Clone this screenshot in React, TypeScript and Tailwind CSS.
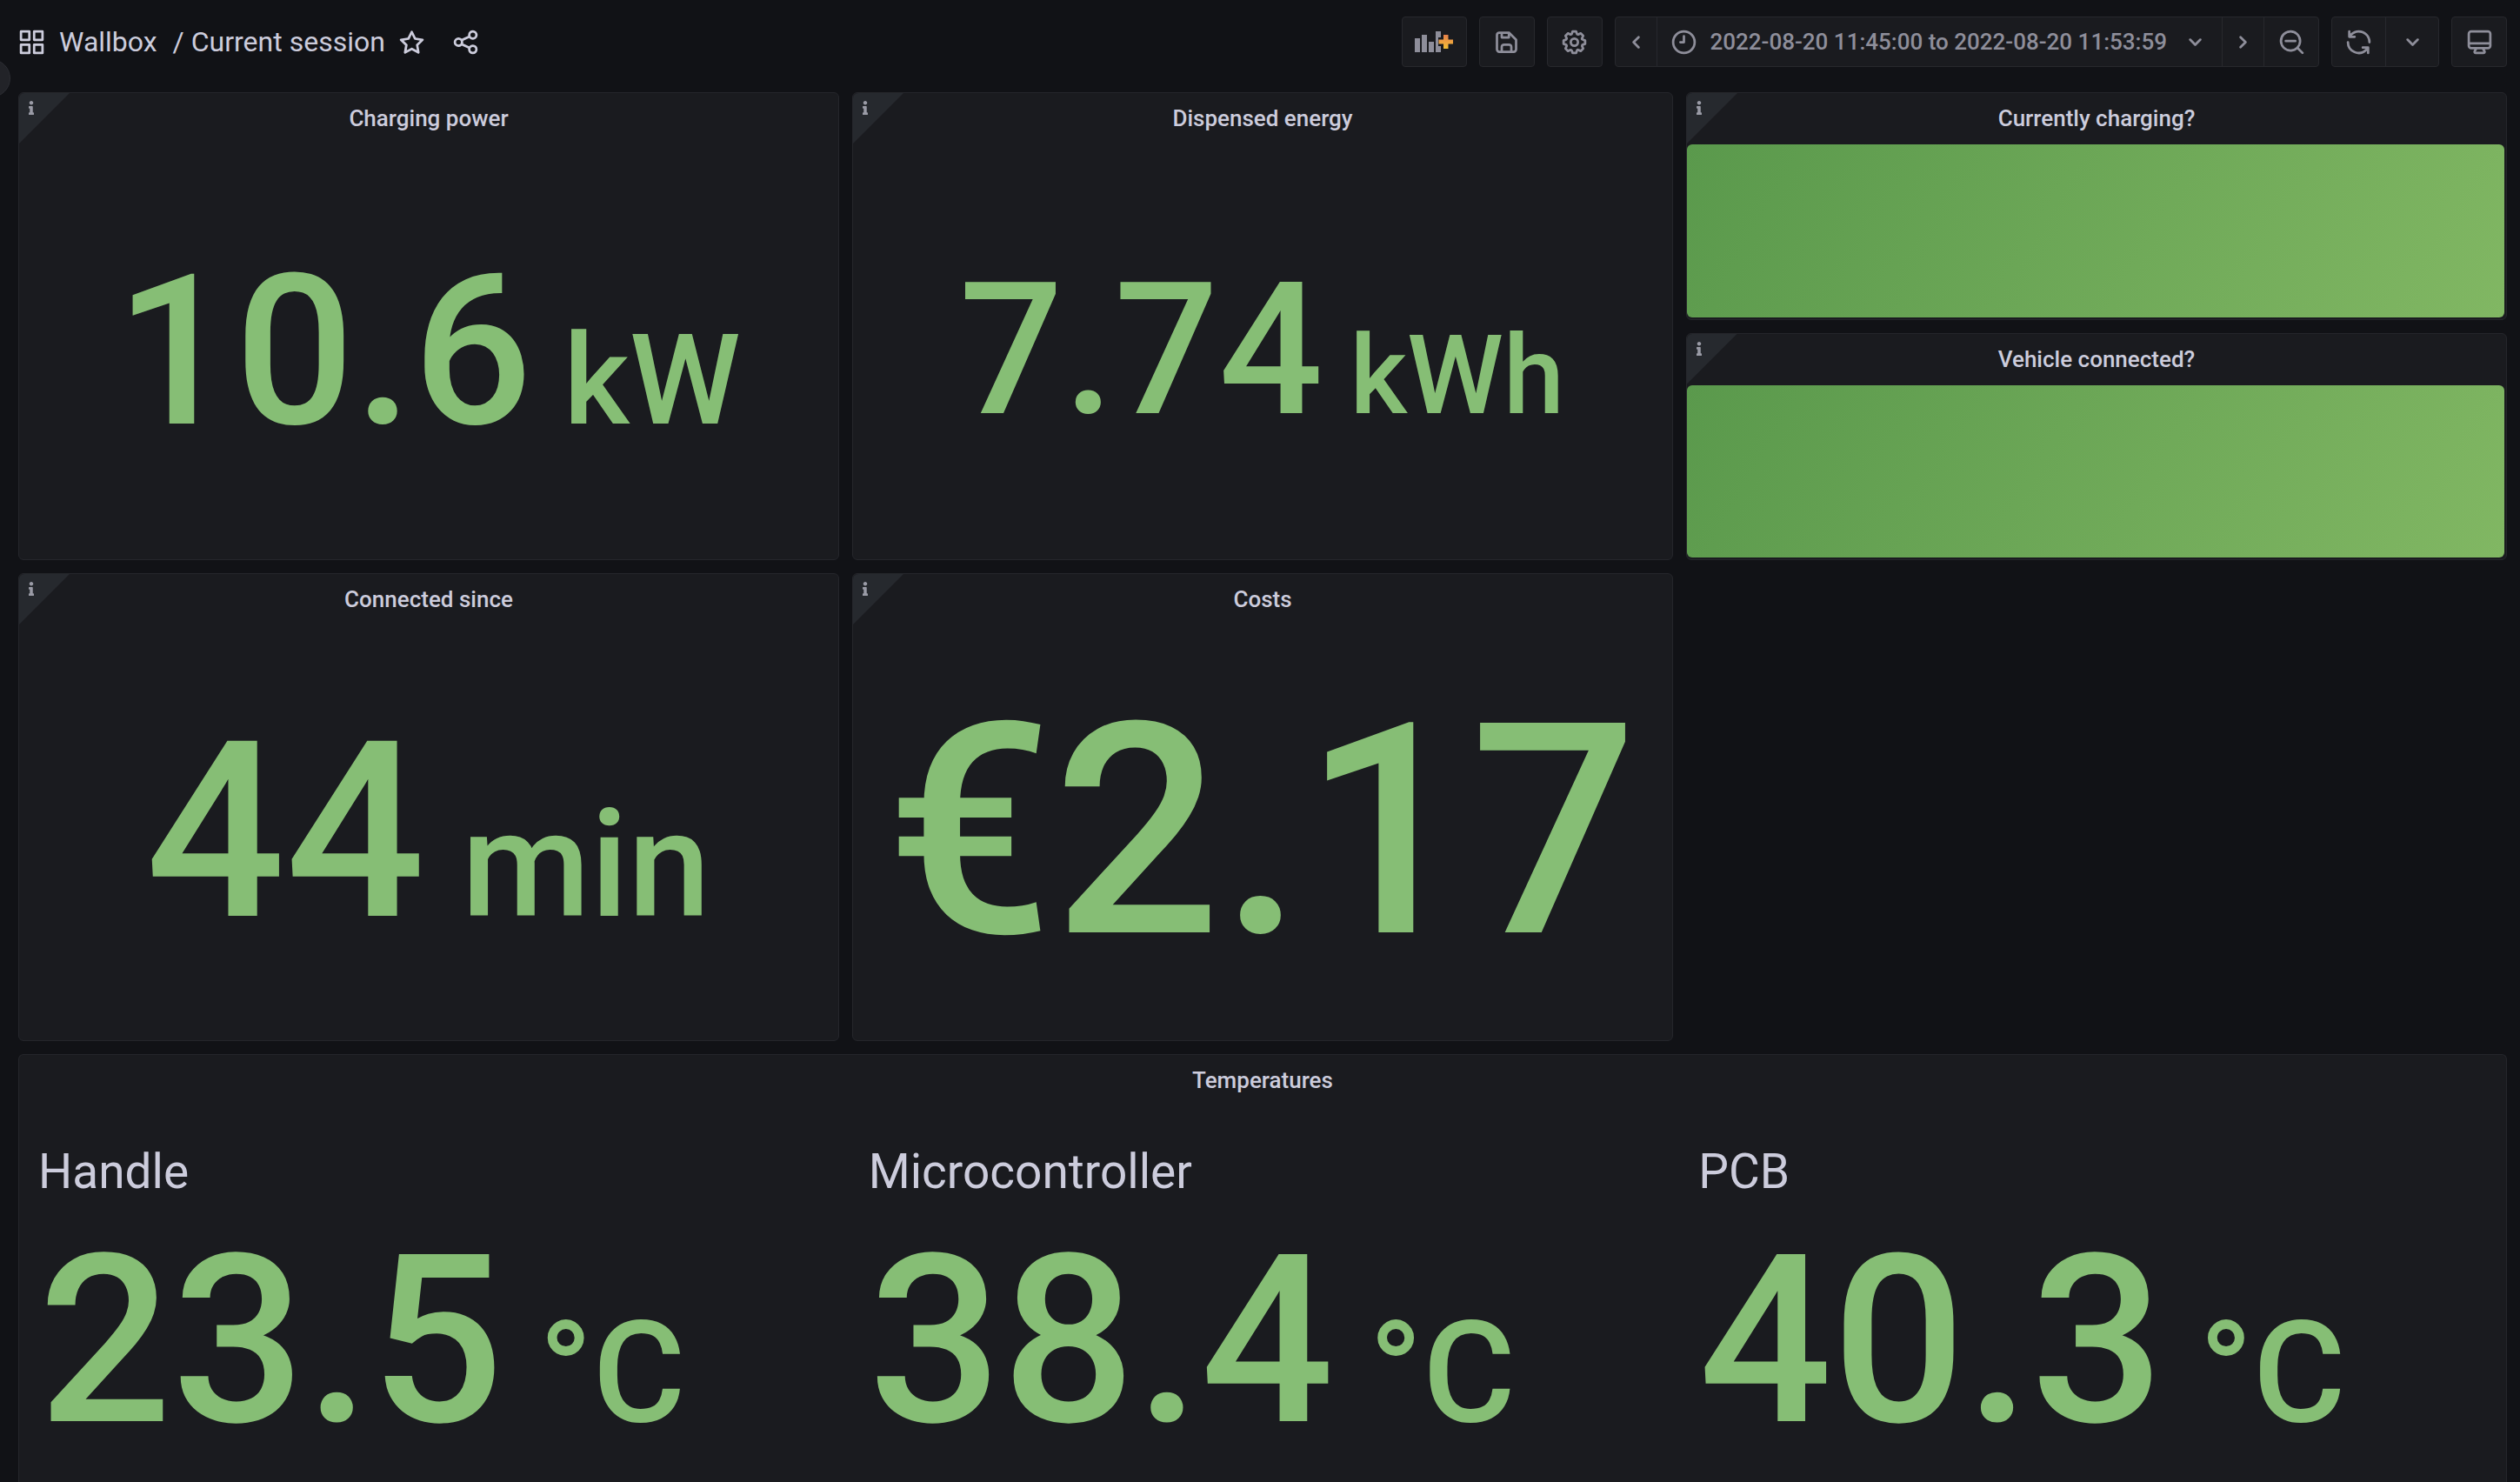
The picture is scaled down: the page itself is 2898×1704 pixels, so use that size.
import React from "react";
import { FaInfo } from "react-icons/fa";

const ICONS = {
  apps: "M10,13H3a1,1,0,0,0-1,1v7a1,1,0,0,0,1,1h7a1,1,0,0,0,1-1V14A1,1,0,0,0,10,13ZM9,20H4V15H9ZM21,2H14a1,1,0,0,0-1,1v7a1,1,0,0,0,1,1h7a1,1,0,0,0,1-1V3A1,1,0,0,0,21,2ZM20,9H15V4h5Zm1,4H14a1,1,0,0,0-1,1v7a1,1,0,0,0,1,1h7a1,1,0,0,0,1-1V14A1,1,0,0,0,21,13Zm-1,7H15V15h5ZM10,2H3A1,1,0,0,0,2,3v7a1,1,0,0,0,1,1h7a1,1,0,0,0,1-1V3A1,1,0,0,0,10,2ZM9,9H4V4H9Z",
  star: "M22,9.67A1,1,0,0,0,21.14,9l-5.69-.83L12.9,3a1,1,0,0,0-1.8,0L8.55,8.16,2.86,9a1,1,0,0,0-.81.68,1,1,0,0,0,.25,1l4.13,4-1,5.68A1,1,0,0,0,6.9,21.44L12,18.77l5.1,2.67a.93.93,0,0,0,.46.12,1,1,0,0,0,.59-.19,1,1,0,0,0,.4-1l-1-5.68,4.13-4A1,1,0,0,0,22,9.67Zm-6.15,4a1,1,0,0,0-.29.88l.72,4.2-3.76-2a1.06,1.06,0,0,0-.94,0l-3.76,2,.72-4.2a1,1,0,0,0-.29-.88l-3-3,4.21-.61a1,1,0,0,0,.76-.55L12,5.7l1.88,3.82a1,1,0,0,0,.76.55l4.21.61Z",
  share: "M18,14a4,4,0,0,0-3.08,1.48l-5.1-2.35a3.64,3.64,0,0,0,0-2.26l5.1-2.35A4,4,0,1,0,14,6a4.17,4.17,0,0,0,.07.71L8.79,9.14a4,4,0,1,0,0,5.72l5.28,2.43A4.17,4.17,0,0,0,14,18a4,4,0,1,0,4-4ZM18,4a2,2,0,1,1-2,2A2,2,0,0,1,18,4ZM6,14a2,2,0,1,1,2-2A2,2,0,0,1,6,14Zm12,6a2,2,0,1,1,2-2A2,2,0,0,1,18,20Z",
  save: "m20.71 9.29-6-6a1 1 0 0 0-.32-.21A1.09 1.09 0 0 0 14 3H6a3 3 0 0 0-3 3v12a3 3 0 0 0 3 3h12a3 3 0 0 0 3-3v-8a1 1 0 0 0-.29-.71ZM9 5h4v2H9Zm6 14H9v-3a1 1 0 0 1 1-1h4a1 1 0 0 1 1 1Zm4-1a1 1 0 0 1-1 1h-1v-3a3 3 0 0 0-3-3h-4a3 3 0 0 0-3 3v3H6a1 1 0 0 1-1-1V6a1 1 0 0 1 1-1h1v3a1 1 0 0 0 1 1h6a1 1 0 0 0 1-1V6.41l4 4Z",
  cog: "M21.32,9.55l-1.89-.63.89-1.78A1,1,0,0,0,20.13,6L18,3.87a1,1,0,0,0-1.15-.19l-1.78.89-.63-1.89A1,1,0,0,0,13.5,2h-3a1,1,0,0,0-.95.68L8.92,4.57,7.14,3.68A1,1,0,0,0,6,3.87L3.87,6a1,1,0,0,0-.19,1.15l.89,1.78-1.89.63A1,1,0,0,0,2,10.5v3a1,1,0,0,0,.68.95l1.89.63-.89,1.78A1,1,0,0,0,3.87,18L6,20.13a1,1,0,0,0,1.15.19l1.78-.89.63,1.89a1,1,0,0,0,.95.68h3a1,1,0,0,0,.95-.68l.63-1.89,1.78.89A1,1,0,0,0,18,20.13L20.13,18a1,1,0,0,0,.19-1.15l-.89-1.78,1.89-.63A1,1,0,0,0,22,13.5v-3A1,1,0,0,0,21.32,9.55ZM20,12.78l-1.2.4A2,2,0,0,0,17.64,16l.57,1.14-1.1,1.1L16,17.64a2,2,0,0,0-2.79,1.16l-.4,1.2H11.22l-.4-1.2A2,2,0,0,0,8,17.64l-1.14.57-1.1-1.1L6.36,16A2,2,0,0,0,5.2,13.18L4,12.78V11.22l1.2-.4A2,2,0,0,0,6.36,8L5.79,6.89l1.1-1.1L8,6.36A2,2,0,0,0,10.82,5.2l.4-1.2h1.56l.4,1.2A2,2,0,0,0,16,6.36l1.14-.57,1.1,1.1L17.64,8a2,2,0,0,0,1.16,2.79l1.2.4ZM12,8a4,4,0,1,0,4,4A4,4,0,0,0,12,8Zm0,6a2,2,0,1,1,2-2A2,2,0,0,1,12,14Z",
  clock: "M12,2A10,10,0,1,0,22,12,10,10,0,0,0,12,2Zm0,18a8,8,0,1,1,8-8A8,8,0,0,1,12,20ZM12,6a1,1,0,0,0-1,1v4H9a1,1,0,0,0,0,2h3a1,1,0,0,0,1-1V7A1,1,0,0,0,12,6Z",
  zoomOut: "M21.71,20.29,18,16.61A9,9,0,1,0,16.61,18l3.68,3.68a1,1,0,0,0,1.42,0A1,1,0,0,0,21.71,20.29ZM11,18a7,7,0,1,1,7-7A7,7,0,0,1,11,18Zm4-8H7a1,1,0,0,0,0,2h8a1,1,0,0,0,0-2Z",
  sync: "M19.91,15.51H15.38a1,1,0,0,0,0,2h2.4A8,8,0,0,1,4,12a1,1,0,1,0-2,0,10,10,0,0,0,16.88,7.23V21a1,1,0,0,0,2,0V16.5A1,1,0,0,0,19.91,15.51ZM12,2A10,10,0,0,0,5.12,4.77V3a1,1,0,0,0-2,0V7.5a1,1,0,0,0,1,1h4.5a1,1,0,0,0,0-2H6.22A8,8,0,0,1,20,12a1,1,0,0,0,2,0A10,10,0,0,0,12,2Z",
  monitor: "M19,2H5A3,3,0,0,0,2,5V15a3,3,0,0,0,3,3H7.64l-.58,1a2,2,0,0,0,0,2,2,2,0,0,0,1.75,1h6.46A2,2,0,0,0,17,21a2,2,0,0,0,0-2l-.59-1H19a3,3,0,0,0,3-3V5A3,3,0,0,0,19,2ZM8.77,20,10,18H14l1.2,2ZM20,15a1,1,0,0,1-1,1H5a1,1,0,0,1-1-1V14H20Zm0-3H4V5A1,1,0,0,1,5,4H19a1,1,0,0,1,1,1Z",
  down: "M17,9.17a1,1,0,0,0-1.41,0L12,12.71,8.46,9.17a1,1,0,0,0-1.41,0,1,1,0,0,0,0,1.42l4.24,4.24a1,1,0,0,0,1.42,0L17,10.59A1,1,0,0,0,17,9.17Z",
  left: "M11.29,12l3.54-3.54a1,1,0,0,0,0-1.41,1,1,0,0,0-1.42,0L9.17,11.29a1,1,0,0,0,0,1.42L13.41,17a1,1,0,0,0,.71.29,1,1,0,0,0,.71-.29,1,1,0,0,0,0-1.41Z",
  right: "M14.83,11.29,10.59,7.05a1,1,0,0,0-1.42,0,1,1,0,0,0,0,1.41L12.71,12,9.17,15.54a1,1,0,0,0,0,1.41,1,1,0,0,0,.71.29,1,1,0,0,0,.71-.29l4.24-4.24A1,1,0,0,0,14.83,11.29Z",
};

function Icon({ name }: { name: keyof typeof ICONS }) {
  return (
    <svg viewBox="0 0 24 24" className="size-[33px] shrink-0 fill-current" aria-hidden="true">
      <path d={ICONS[name]} />
    </svg>
  );
}

function AddPanelIcon() {
  return (
    <svg viewBox="0 0 44 24" className="h-6 w-11 shrink-0" aria-hidden="true">
      <defs>
        <linearGradient id="plus" x1="0" y1="0" x2="0" y2="1">
          <stop offset="0" stopColor="#e8804a" />
          <stop offset="1" stopColor="#f2bf35" />
        </linearGradient>
      </defs>
      <path className="fill-current" d="M0 8h6v16H0zM8 4h6v20H8zM16 12h6v12h-6zM24 0h6v7h-3v10h3v7h-6z" />
      <path fill="url(#plus)" d="M33 4h5.5v5.5H44v5h-5.500V20H33v-5.500h-5.500v-5H33z" />
    </svg>
  );
}

const SEGMENT = "flex items-center justify-center";
const GROUP =
  "flex h-[58px] shrink-0 divide-x divide-[#27282d] overflow-hidden rounded-sm border border-[#27282d] bg-[#1a1b1f] text-[#8e8e9a]";

function Toolbar() {
  return (
    <header className="flex items-center justify-between pt-[19px] pr-[15px] pl-5 text-[#ccccdc]">
      <div className="flex items-center">
        <Icon name="apps" />
        <h1 className="ml-[15px] flex gap-[18px] text-[32px] leading-10 whitespace-pre">
          <a href="#folder">Wallbox</a>
          <a href="#dashboard">/ Current session</a>
        </h1>
        <button type="button" aria-label="Mark as favorite" className="ml-[14px]">
          <Icon name="star" />
        </button>
        <button type="button" aria-label="Share dashboard" className="ml-[29px]">
          <Icon name="share" />
        </button>
      </div>
      <div className="flex items-center gap-[14px]">
        <div className={GROUP}>
          <button type="button" aria-label="Add panel" className={`${SEGMENT} w-[73px]`}>
            <AddPanelIcon />
          </button>
        </div>
        <div className={GROUP}>
          <button type="button" aria-label="Save dashboard" className={`${SEGMENT} w-[62px]`}>
            <Icon name="save" />
          </button>
        </div>
        <div className={GROUP}>
          <button type="button" aria-label="Dashboard settings" className={`${SEGMENT} w-[62px]`}>
            <Icon name="cog" />
          </button>
        </div>
        <div className={GROUP}>
          <button type="button" aria-label="Move time range backwards" className={`${SEGMENT} w-12`}>
            <Icon name="left" />
          </button>
          <button type="button" className={`${SEGMENT} px-[14px] text-[26px] font-medium`}>
            <Icon name="clock" />
            <span className="mr-4 ml-[14px] whitespace-nowrap">2022-08-20 11:45:00 to 2022-08-20 11:53:59</span>
            <Icon name="down" />
          </button>
          <button type="button" aria-label="Move time range forwards" className={`${SEGMENT} w-12`}>
            <Icon name="right" />
          </button>
          <button type="button" aria-label="Zoom out time range" className={`${SEGMENT} w-[62px]`}>
            <Icon name="zoomOut" />
          </button>
        </div>
        <div className={GROUP}>
          <button type="button" aria-label="Refresh dashboard" className={`${SEGMENT} w-[62px]`}>
            <Icon name="sync" />
          </button>
          <button type="button" aria-label="Set auto refresh interval" className={`${SEGMENT} w-[60px]`}>
            <Icon name="down" />
          </button>
        </div>
        <div className={GROUP}>
          <button type="button" aria-label="Cycle view mode" className={`${SEGMENT} w-[62px]`}>
            <Icon name="monitor" />
          </button>
        </div>
      </div>
    </header>
  );
}

function Panel({ title, info = true, className, children }: {
  title: string;
  info?: boolean;
  className?: string;
  children: React.ReactNode;
}) {
  return (
    <section className={`relative flex min-w-0 flex-col rounded-md border border-[#25262b] bg-[#1a1b1f] ${className ?? ""}`}>
      {info && (
        <button
          type="button"
          aria-label={`${title} description`}
          className="absolute top-0 left-0 flex size-[58px] items-start rounded-tl-md bg-[#26292e] pt-[9px] pl-[10px] text-[#9a9ba6] [clip-path:polygon(0_0,100%_0,0_100%)]"
        >
          <FaInfo className="h-4 w-2" />
        </button>
      )}
      <h2 className="flex h-[59px] shrink-0 items-center justify-center text-[26px] font-medium text-[#ccccdc]">{title}</h2>
      {children}
    </section>
  );
}

function Stat({ value, unit, size, unitClass }: { value: string; unit?: string; size: string; unitClass?: string }) {
  return (
    <div className="flex flex-1 items-center justify-center pr-0.5 pb-0.5">
      <p className={`flex items-baseline leading-none font-medium text-[#86be75] ${size}`}>
        {value}
        {unit && <span className={unitClass}>{unit}</span>}
      </p>
    </div>
  );
}

function StatusFill() {
  return <div className="mr-0.5 mb-0.5 flex-1 rounded-md bg-linear-[120deg] from-[#5a994c] to-[#81b763]" />;
}

const TEMPERATURES = [
  { label: "Handle", value: "23.5" },
  { label: "Microcontroller", value: "38.4" },
  { label: "PCB", value: "40.3" },
];

export default function App() {
  return (
    <div className="relative flex h-screen flex-col overflow-hidden bg-[#111216] font-[Roboto,sans-serif]">
      <button
        type="button"
        aria-label="Expand sidebar"
        className="absolute top-[68px] -left-8 size-11 rounded-full border border-[#2c2d33] bg-[#222328]"
      />
      <Toolbar />
      <main className="flex flex-1 flex-col gap-[15px] pt-[29px] pr-[15px] pl-[21px]">
        <div className="grid grid-cols-3 gap-[15px]">
          <Panel title="Charging power" className="h-[538px]">
            <Stat value="10.6" unit="kW" size="text-[242px]" unitClass="ml-9 text-[145px]" />
          </Panel>
          <Panel title="Dispensed energy" className="h-[538px]">
            <Stat value="7.74" unit="kWh" size="text-[211px]" unitClass="ml-[31px] text-[126px]" />
          </Panel>
          <div className="flex flex-col gap-[15px]">
            <Panel title="Currently charging?" className="flex-1">
              <StatusFill />
            </Panel>
            <Panel title="Vehicle connected?" className="flex-1">
              <StatusFill />
            </Panel>
          </div>
          <Panel title="Connected since" className="h-[538px]">
            <Stat value="44" unit="min" size="text-[283px]" unitClass="ml-[42px] text-[170px]" />
          </Panel>
          <Panel title="Costs" className="h-[538px]">
            <Stat value="€2.17" size="text-[339px]" />
          </Panel>
        </div>
        <Panel title="Temperatures" info={false} className="flex-1 rounded-b-none border-b-0">
          <div className="grid grid-cols-3 gap-x-1">
            {TEMPERATURES.map(({ label, value }) => (
              <div key={label} className="pt-[39px] pl-[22px]">
                <h3 className="text-[55px] leading-[72px] text-[#ccccdc]">{label}</h3>
                <p className="mt-6 flex items-baseline text-[270px] leading-[270px] font-medium text-[#86be75]">
                  {value}
                  <span className="ml-10 text-[163px] leading-none">°C</span>
                </p>
              </div>
            ))}
          </div>
        </Panel>
      </main>
    </div>
  );
}
